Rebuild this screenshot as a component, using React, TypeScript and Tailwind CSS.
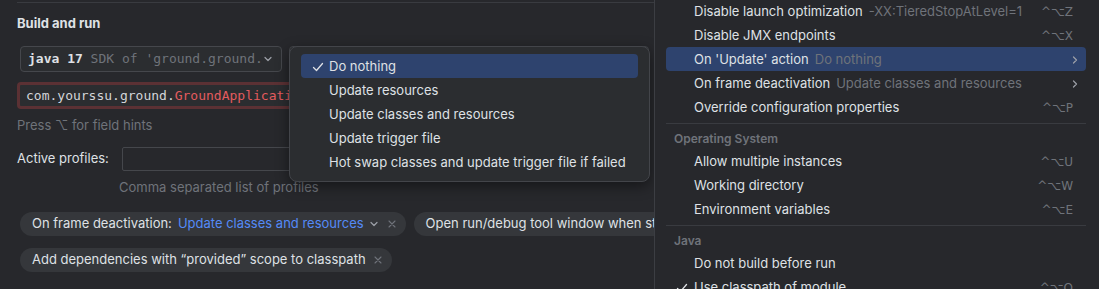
import React from 'react';

const SANS = { fontFamily: 'Inter, "DejaVu Sans", sans-serif' };
const MONO = { fontFamily: '"DejaVu Sans Mono", "Liberation Mono", monospace' };

function Chevron({ className = '' }: { className?: string }) {
  return (
    <svg width="10" height="10" viewBox="0 0 10 10" className={className}>
      <path d="M2 3.5 L5 6.5 L8 3.5" fill="none" stroke="currentColor" strokeWidth="1.2" strokeLinecap="round" strokeLinejoin="round" />
    </svg>
  );
}

function Close() {
  return (
    <svg width="10" height="10" viewBox="0 0 10 10" className="text-[#6f737a]">
      <path d="M2 2 L8 8 M8 2 L2 8" fill="none" stroke="currentColor" strokeWidth="1.1" strokeLinecap="round" />
    </svg>
  );
}

function Check() {
  return (
    <svg width="12" height="12" viewBox="0 0 12 12">
      <path d="M1.5 6.5 L4.5 9.5 L10.5 2.5" fill="none" stroke="#dfe1e5" strokeWidth="1.3" strokeLinecap="round" strokeLinejoin="round" />
    </svg>
  );
}

function Arrow() {
  return (
    <svg width="10" height="10" viewBox="0 0 10 10" className="text-[#9da0a8]">
      <path d="M3.5 2 L6.5 5 L3.5 8" fill="none" stroke="currentColor" strokeWidth="1.2" strokeLinecap="round" strokeLinejoin="round" />
    </svg>
  );
}

function Chip({ children, className = '' }: { children: React.ReactNode; className?: string }) {
  return (
    <div className={`flex h-6 shrink-0 items-center gap-[6px] whitespace-nowrap rounded-full bg-[#35373b] pl-3 pr-[9px] ${className}`}>
      {children}
    </div>
  );
}

const dropdownItems = [
  'Do nothing',
  'Update resources',
  'Update classes and resources',
  'Update trigger file',
  'Hot swap classes and update trigger file if failed',
];

type MenuRow =
  | { kind: 'item'; label: string; hint?: string; shortcut?: string; submenu?: boolean; selected?: boolean; checked?: boolean }
  | { kind: 'sep' }
  | { kind: 'header'; label: string };

const menuRows: MenuRow[] = [
  { kind: 'item', label: 'Disable launch optimization', hint: '-XX:TieredStopAtLevel=1', shortcut: '^⌥Z' },
  { kind: 'item', label: 'Disable JMX endpoints', shortcut: '^⌥X' },
  { kind: 'item', label: "On 'Update' action", hint: 'Do nothing', submenu: true, selected: true },
  { kind: 'item', label: 'On frame deactivation', hint: 'Update classes and resources', submenu: true },
  { kind: 'item', label: 'Override configuration properties', shortcut: '^⌥P' },
  { kind: 'sep' },
  { kind: 'header', label: 'Operating System' },
  { kind: 'item', label: 'Allow multiple instances', shortcut: '^⌥U' },
  { kind: 'item', label: 'Working directory', shortcut: '^⌥W' },
  { kind: 'item', label: 'Environment variables', shortcut: '^⌥E' },
  { kind: 'sep' },
  { kind: 'header', label: 'Java' },
  { kind: 'item', label: 'Do not build before run' },
  { kind: 'item', label: 'Use classpath of module', shortcut: '^⌥O', checked: true },
];

export default function App() {
  return (
    <div className="relative h-[289px] w-[1099px] overflow-hidden bg-[#27282c] text-[13px] text-[#dfe1e5]" style={SANS}>
      {/* Settings form, clipped where the options menu covers it */}
      <div className="flex w-[654px] flex-col overflow-hidden pl-[17px] pt-[2px]">
        <div className="h-px w-[640px] bg-[#393b40]" />
        <div className="mt-[12px] h-4 font-bold leading-4">Build and run</div>

        <div className="mt-[15px] flex h-[26px] gap-[7px] pl-[3px]">
          <div className="flex w-[262px] items-center justify-between rounded-[4px] border border-[#45474c] bg-[#2b2d30] pl-[7px] pr-[8px]" style={MONO}>
            <span className="whitespace-nowrap">
              <span className="font-bold text-[#dfe1e5]">java 17</span>
              <span className="text-[#6f737a]"> SDK of 'ground.ground.</span>
            </span>
            <Chevron className="text-[#9da0a8]" />
          </div>
          <div className="w-[360px] rounded-[4px] border border-[#45474c] bg-[#2b2d30]" />
        </div>

        <div className="mt-[10px] flex h-[27px] w-[633px] items-center rounded-[4px] border-[3px] border-[#5b3134] bg-[#2b2d30] pl-[6px]" style={MONO}>
          <span className="whitespace-nowrap">
            <span className="text-[#d3d5d9]">com.yourssu.ground.</span>
            <span className="text-[#e35b5e]">GroundApplication</span>
          </span>
        </div>

        <div className="mt-[8px] h-4 leading-4 text-[#6f737a]">Press ⌥ for field hints</div>

        <div className="mt-[14px] flex h-6 items-center">
          <span className="w-[105px]">Active profiles:</span>
          <div className="h-6 w-[520px] rounded-[2px] border border-[#45474c]" />
        </div>
        <div className="mt-[8px] h-4 pl-[102px] leading-4 text-[#6f737a]">Comma separated list of profiles</div>

        <div className="mt-[17px] flex gap-2 pl-[3px]">
          <Chip>
            <span>On frame deactivation:</span>
            <span className="flex items-center gap-[5px] text-[#548af7]">
              Update classes and resources
              <Chevron className="text-[#9da0a8]" />
            </span>
            <span className="ml-[2px]"><Close /></span>
          </Chip>
          <Chip className="pr-6">
            <span>Open run/debug tool window when started</span>
          </Chip>
        </div>
        <div className="mt-3 flex pl-[3px]">
          <Chip>
            <span>Add dependencies with “provided” scope to classpath</span>
            <span className="ml-[1px]"><Close /></span>
          </Chip>
        </div>
      </div>

      {/* Combo dropdown popup */}
      <div className="absolute left-[289px] top-[46px] w-[361px] rounded-lg border border-[#43454a] bg-[#2b2d30] px-[11px] pb-[7px] pt-[7px] shadow-[0_4px_14px_rgba(0,0,0,0.45)]">
        {dropdownItems.map((item, i) => (
          <div
            key={item}
            className={`flex h-6 items-center whitespace-nowrap rounded-[4px] pt-px ${i === 0 ? 'bg-[#2e436e]' : ''}`}
          >
            <span className="flex w-[28px] justify-center pl-[5px]">{i === 0 && <Check />}</span>
            <span>{item}</span>
          </div>
        ))}
      </div>

      {/* Right-side options menu */}
      <div className="absolute left-[654px] top-0 h-[289px] w-[445px] border-l border-[#3c3e43] bg-[#27282c]">
        <div className="-mt-px flex flex-col pl-[11px] pr-[13px]">
          {menuRows.map((row, i) => {
            if (row.kind === 'sep') {
              return (
                <div key={i} className="flex h-2 items-center">
                  <div className="h-px w-full bg-[#393b40]" />
                </div>
              );
            }
            if (row.kind === 'header') {
              return (
                <div key={i} className="flex h-[22px] items-center pl-2 pt-px text-[12px] font-semibold text-[#6f737a]">
                  {row.label}
                </div>
              );
            }
            return (
              <div
                key={i}
                className={`flex h-6 items-center whitespace-nowrap rounded-[4px] pr-[13px] pt-px ${row.selected ? 'bg-[#2e436e]' : ''}`}
              >
                <span className="flex w-[28px] justify-center pl-[3px]">{row.checked && <Check />}</span>
                <span>{row.label}</span>
                {row.hint && <span className="ml-[6px] text-[#6f737a]">{row.hint}</span>}
                <span className="ml-auto">
                  {row.shortcut && <span className="text-[#6f737a]" style={{ fontFamily: '"DejaVu Sans", Inter, sans-serif', fontSize: 12 }}>{row.shortcut}</span>}
                  {row.submenu && <span className="-mr-[7px] flex"><Arrow /></span>}
                </span>
              </div>
            );
          })}
        </div>
      </div>
    </div>
  );
}
